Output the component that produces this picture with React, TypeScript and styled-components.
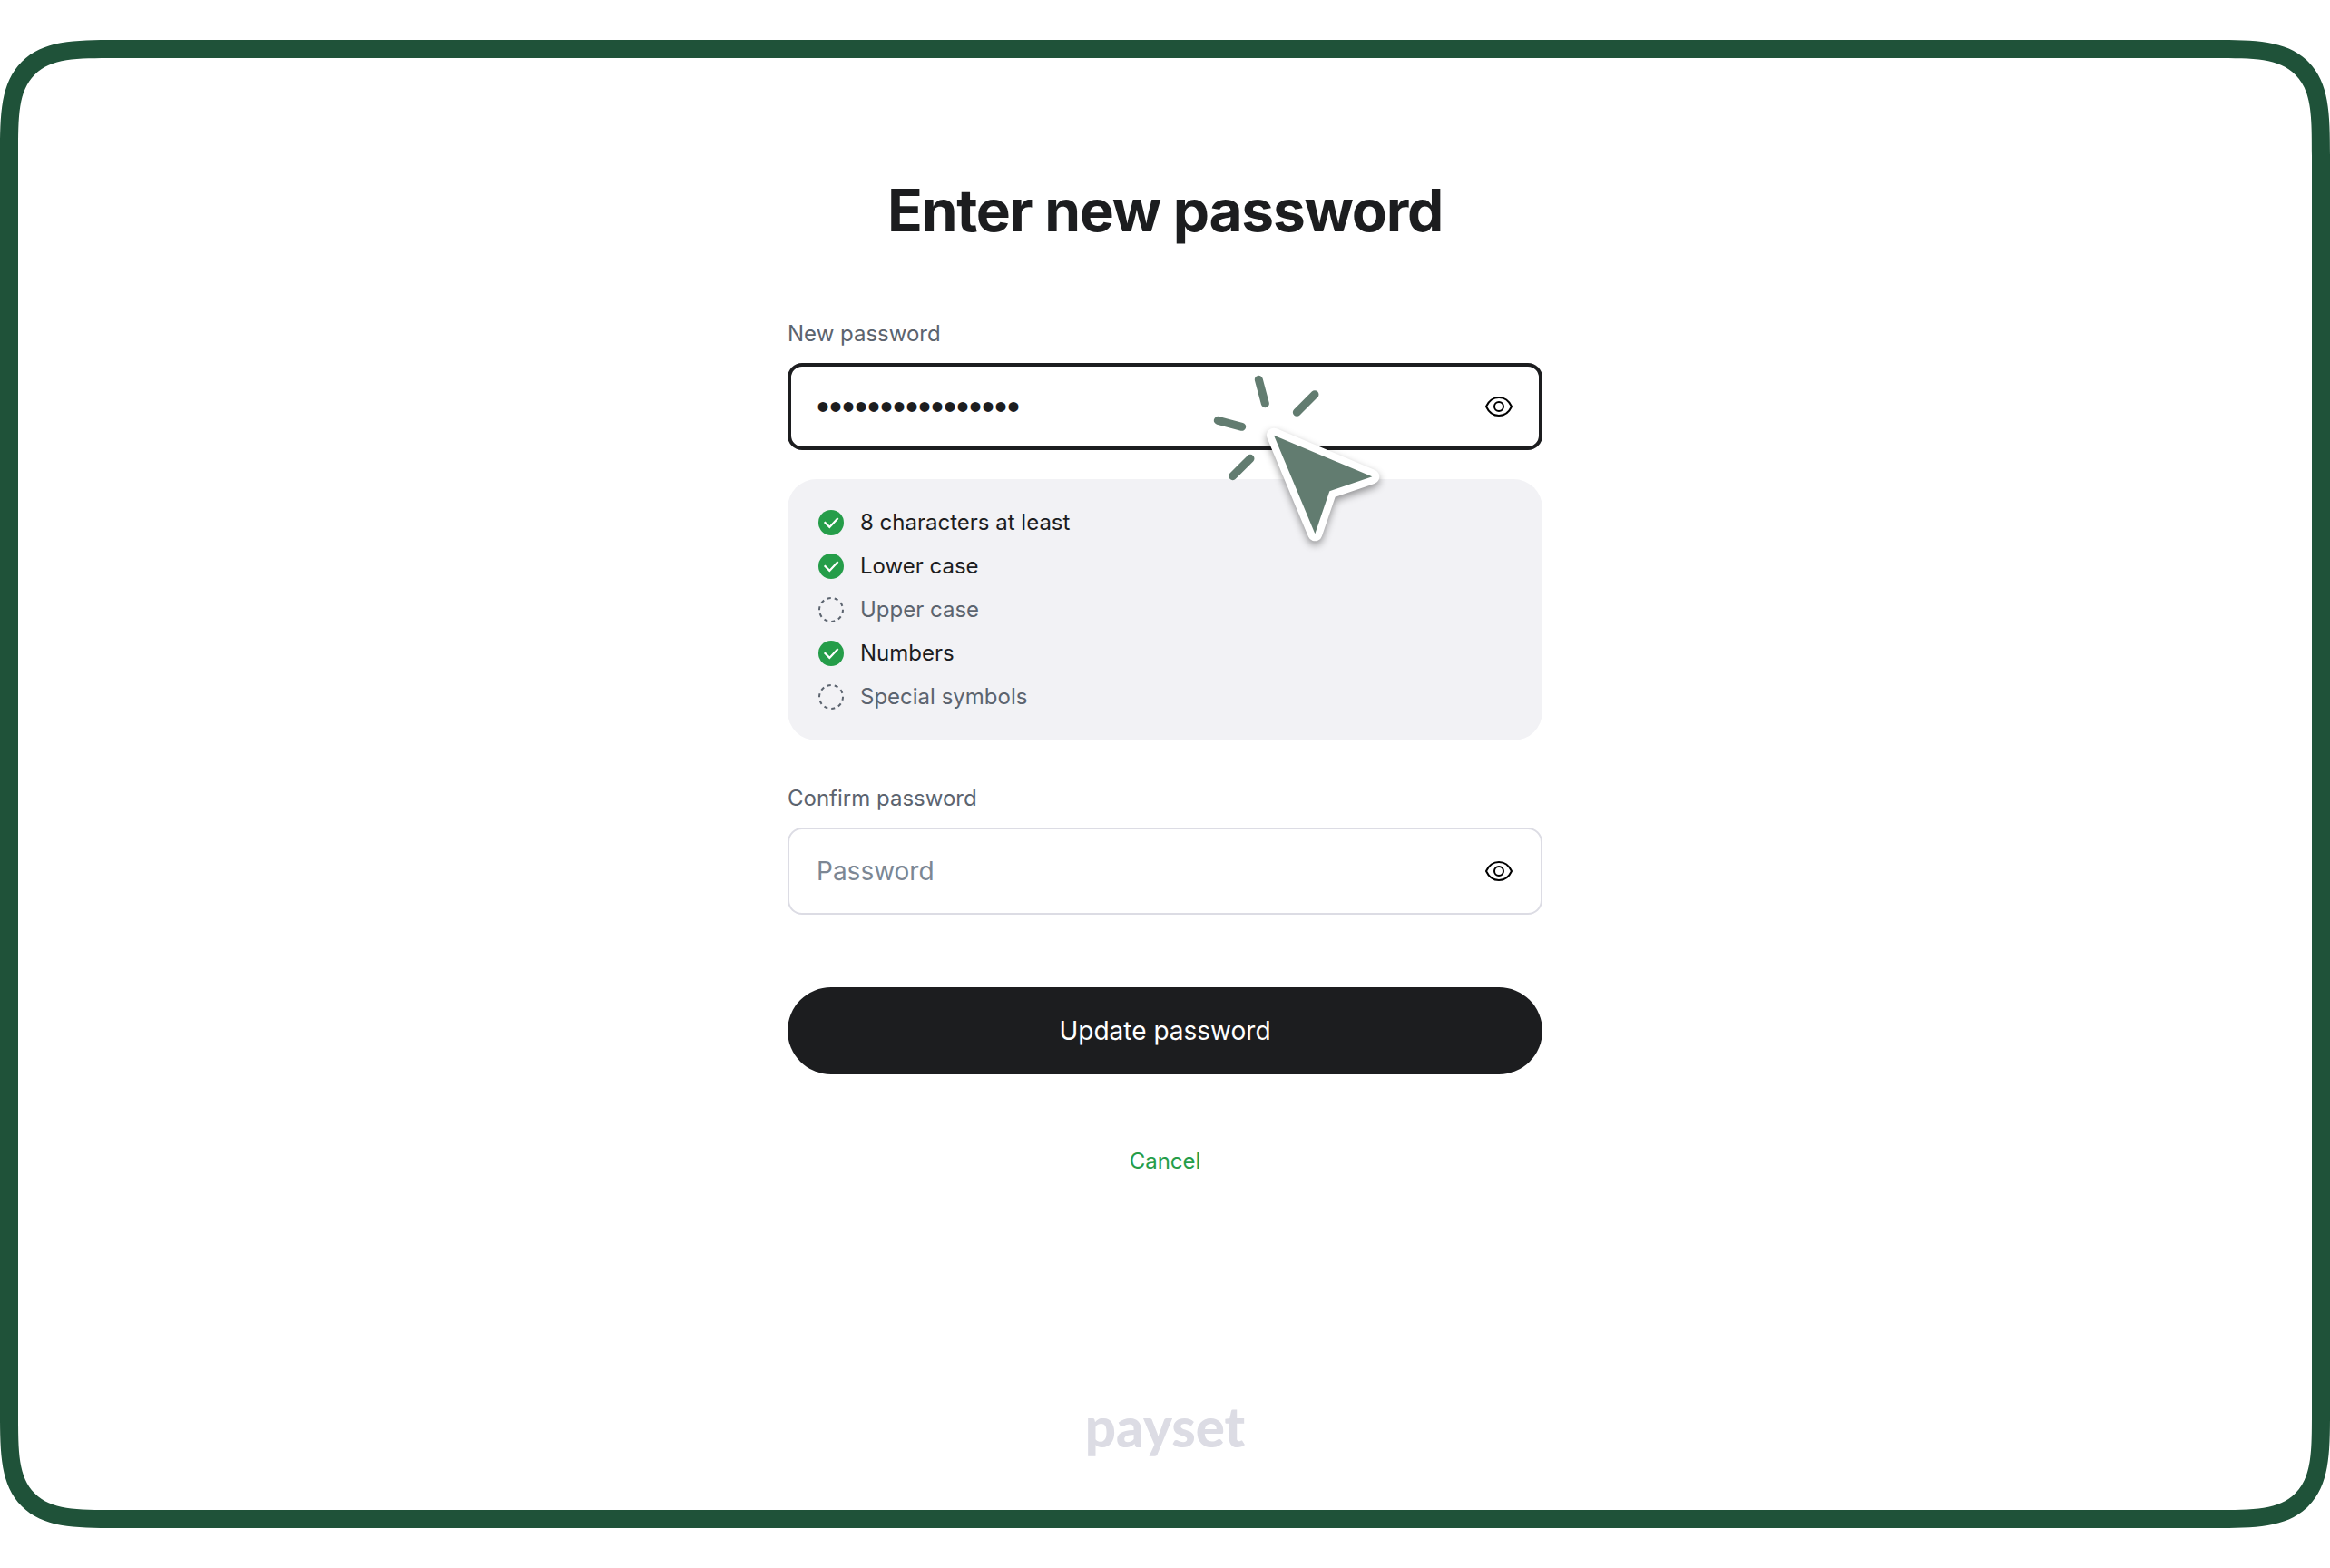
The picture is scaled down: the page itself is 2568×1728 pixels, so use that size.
import React, { useState } from "react";
import styled, { createGlobalStyle } from "styled-components";

const color = {
  ink: "#1c1d1f",
  muted: "#5c646f",
  placeholder: "#7c8794",
  line: "#dcdce4",
  panel: "#f2f2f5",
  green: "#259d49",
  frame: "#1f5239",
  pointer: "#627c70",
};

const GlobalStyle = createGlobalStyle`
  *, *::before, *::after { box-sizing: border-box; }
  body {
    margin: 0;
    background: #ffffff;
    color: ${color.ink};
    font-family: Inter, "Liberation Sans", sans-serif;
    font-size: 24px;
    line-height: 32px;
  }
`;

const Page = styled.div`
  display: flex;
  min-height: 100vh;
  padding: 44px 0;
`;

const Frame = styled.div`
  flex: 1;
  display: flex;
  padding: 20px;
  border-radius: 128px;
  corner-shape: superellipse(1.74);
  background: ${color.frame};
`;

const Screen = styled.main`
  flex: 1;
  display: flex;
  flex-direction: column;
  align-items: center;
  padding: 128px 32px 60px;
  border-radius: 108px;
  corner-shape: superellipse(1.9);
  background: #ffffff;
`;

const Title = styled.h1`
  margin: 0 0 80px;
  font-size: 64px;
  line-height: 80px;
  font-weight: 700;
  letter-spacing: -0.02em;
  text-align: center;
`;

const Form = styled.form`
  display: flex;
  flex-direction: column;
  width: 100%;
  max-width: 832px;
`;

const Field = styled.div`
  display: flex;
  flex-direction: column;
  gap: 16px;
`;

const Label = styled.label`
  color: ${color.muted};
`;

const Control = styled.div<{ $active?: boolean }>`
  position: relative;
  display: flex;
  align-items: center;
  height: 96px;
  padding: 0 32px;
  border-radius: 16px;
  box-shadow: inset 0 0 0 ${(p) => (p.$active ? `4px ${color.ink}` : `2px ${color.line}`)};
`;

const Input = styled.input`
  flex: 1;
  min-width: 0;
  height: 48px;
  padding: 0;
  border: 0;
  outline: 0;
  background: transparent;
  color: ${color.ink};
  font: inherit;
  font-size: 28px;
  &::placeholder { color: ${color.placeholder}; opacity: 1; }
  &[type="password"]:not(:placeholder-shown) {
    font-family: "Liberation Sans", sans-serif;
    font-size: 40px;
  }
`;

const IconButton = styled.button`
  display: flex;
  padding: 0;
  border: 0;
  background: transparent;
  color: #000000;
  cursor: pointer;
`;

const Rules = styled.ul`
  margin: 32px 0 48px;
  padding: 24px 32px;
  list-style: none;
  border-radius: 32px;
  background: ${color.panel};
`;

const Rule = styled.li<{ $met: boolean }>`
  display: flex;
  align-items: center;
  gap: 16px;
  height: 48px;
  color: ${(p) => (p.$met ? color.ink : color.muted)};
`;

const Submit = styled.button`
  height: 96px;
  margin: 80px 0;
  border: 0;
  border-radius: 48px;
  background: ${color.ink};
  color: #ffffff;
  font: inherit;
  font-size: 28px;
  cursor: pointer;
`;

const Cancel = styled.a`
  align-self: center;
  color: ${color.green};
  text-decoration: none;
`;

const Brand = styled.footer`
  margin-top: auto;
  color: ${color.line};
  font-family: Lato, sans-serif;
  font-size: 60px;
  line-height: 64px;
  font-weight: 900;
`;

const Pointer = styled.svg`
  position: absolute;
  left: 452px;
  top: -10px;
  z-index: 1;
  overflow: visible;
  pointer-events: none;
`;

const PointerArrow = styled.path`
  filter: drop-shadow(0 12px 12px rgba(0, 0, 0, 0.4));
`;

const EyeIcon = () => (
  <svg width="32" height="32" viewBox="0 0 32 32" fill="none" stroke="currentColor" strokeWidth="2" aria-hidden="true">
    <path d="M2 16C5 9.500 10 6 16 6S27 9.500 30 16C27 22.500 22 26 16 26S5 22.500 2 16Z" strokeLinejoin="round" />
    <circle cx="16" cy="16" r="5" />
  </svg>
);

const StatusIcon = ({ met }: { met: boolean }) =>
  met ? (
    <svg width="32" height="32" viewBox="0 0 32 32" fill="none" aria-hidden="true">
      <circle cx="16" cy="16" r="14" fill={color.green} />
      <path d="M8.700 15.300L14.300 20.900L23.600 11" stroke="#ffffff" strokeWidth="2.2" />
    </svg>
  ) : (
    <svg width="32" height="32" viewBox="0 0 32 32" fill="none" aria-hidden="true">
      <circle
        cx="16"
        cy="16"
        r="13"
        stroke={color.muted}
        strokeWidth="2"
        pathLength="100"
        strokeDasharray="5 5"
        transform="rotate(-1 16 16)"
      />
    </svg>
  );

const ClickPointer = () => (
  <Pointer width="240" height="230" viewBox="0 0 720 690" fill="none" aria-hidden="true">
    <path
      d="M202 85L223 164M387 134L328 193M67 220L146 241M174 346L116 404"
      stroke={color.pointer}
      strokeWidth="27"
      strokeLinecap="round"
    />
    <PointerArrow
      d="M252 269L577 406L436 454L388 595Z"
      fill={color.pointer}
      stroke="#ffffff"
      strokeWidth="48"
      strokeLinejoin="round"
      paintOrder="stroke"
    />
  </Pointer>
);

type PasswordFieldProps = {
  id: string;
  label: string;
  initial?: string;
  active?: boolean;
  children?: React.ReactNode;
};

const PasswordField = ({ id, label, initial = "", active, children }: PasswordFieldProps) => {
  const [value, setValue] = useState(initial);
  const [shown, setShown] = useState(false);
  return (
    <Field>
      <Label htmlFor={id}>{label}</Label>
      <Control $active={active}>
        <Input
          id={id}
          type={shown ? "text" : "password"}
          placeholder="Password"
          value={value}
          onChange={(e) => setValue(e.target.value)}
        />
        <IconButton type="button" aria-label="Show password" onClick={() => setShown(!shown)}>
          <EyeIcon />
        </IconButton>
        {children}
      </Control>
    </Field>
  );
};

const rules = [
  { text: "8 characters at least", met: true },
  { text: "Lower case", met: true },
  { text: "Upper case", met: false },
  { text: "Numbers", met: true },
  { text: "Special symbols", met: false },
];

export default function App() {
  return (
    <Page>
      <GlobalStyle />
      <Frame>
        <Screen>
          <Title>Enter new password</Title>
          <Form onSubmit={(e) => e.preventDefault()}>
            <PasswordField id="new-password" label="New password" initial="password12345678" active>
              <ClickPointer />
            </PasswordField>
            <Rules>
              {rules.map((rule) => (
                <Rule key={rule.text} $met={rule.met}>
                  <StatusIcon met={rule.met} />
                  {rule.text}
                </Rule>
              ))}
            </Rules>
            <PasswordField id="confirm-password" label="Confirm password" />
            <Submit type="submit">Update password</Submit>
            <Cancel href="#cancel">Cancel</Cancel>
          </Form>
          <Brand>payset</Brand>
        </Screen>
      </Frame>
    </Page>
  );
}
